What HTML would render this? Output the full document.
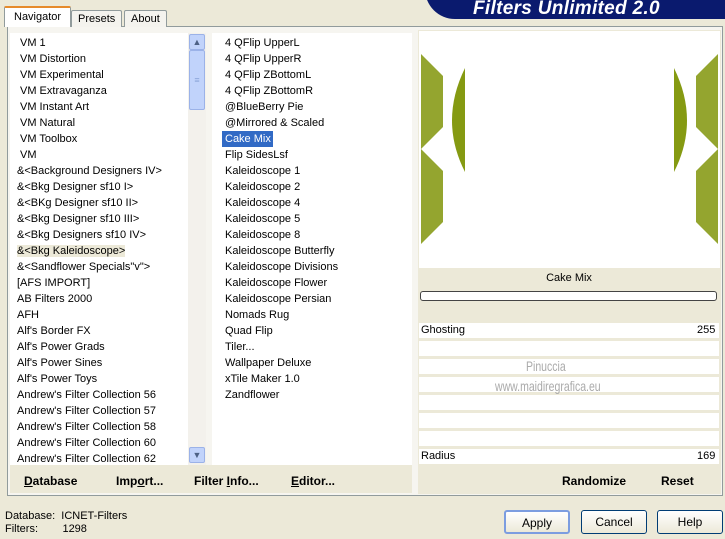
<!DOCTYPE html>
<html><head><style>
*{margin:0;padding:0;box-sizing:border-box}
body{width:725px;height:539px;background:#ece9d8;font-family:"Liberation Sans",sans-serif;font-size:11px;color:#000;position:relative;overflow:hidden}
.abs{position:absolute}
.tab{position:absolute;top:10px;height:17px;border:1px solid #919b9c;border-bottom:none;background:#f4f3ee;padding:2px 6px 0;font-size:11px;border-radius:2px 2px 0 0}
.panel{position:absolute;left:7px;top:26px;width:716px;height:470px;border:1px solid #919b9c;background:#f6f5f0}
.list{position:absolute;background:#fff}
.list div{height:16px;line-height:16px;white-space:nowrap}
.btnbar{position:absolute;font-weight:bold;font-size:12px}
.btn{position:absolute;top:510px;width:66px;height:24px;border:1px solid #003c74;border-radius:3px;background:linear-gradient(#fff,#ece9d8);text-align:center;line-height:22px;font-size:12px}
.row{position:absolute;left:419px;width:300px;background:#fff;height:15px}
</style></head><body>
<div class="abs" style="left:425px;top:-20px;width:310px;height:39px;background:#0a1a6e;border-radius:0 0 0 30px"></div>
<div class="abs" style="left:473px;top:-2px;color:#fff;font-weight:bold;font-style:italic;font-size:19px;letter-spacing:0.3px">Filters Unlimited 2.0</div>
<div class="panel"></div>
<div class="tab" style="left:4px;top:6px;height:21px;background:#fff;border-top:2px solid #e68b2c;z-index:2;padding:3px 9px 0;border-bottom:none">Navigator</div>
<div class="tab" style="left:71px">Presets</div>
<div class="tab" style="left:124px">About</div>
<div class="list" style="left:10px;top:33px;width:178px;height:432px;padding-left:7px;padding-top:2px">
<div style="padding-left:3px">VM 1</div><div style="padding-left:3px">VM Distortion</div><div style="padding-left:3px">VM Experimental</div><div style="padding-left:3px">VM Extravaganza</div><div style="padding-left:3px">VM Instant Art</div><div style="padding-left:3px">VM Natural</div><div style="padding-left:3px">VM Toolbox</div><div style="padding-left:3px">VM</div>
<div>&amp;&lt;Background Designers IV&gt;</div><div>&amp;&lt;Bkg Designer sf10 I&gt;</div><div>&amp;&lt;BKg Designer sf10 II&gt;</div><div>&amp;&lt;Bkg Designer sf10 III&gt;</div><div>&amp;&lt;Bkg Designers sf10 IV&gt;</div><div><span style="background:#ece9d8">&amp;&lt;Bkg Kaleidoscope&gt;</span></div><div>&amp;&lt;Sandflower Specials"v"&gt;</div><div>[AFS IMPORT]</div><div>AB Filters 2000</div><div>AFH</div><div>Alf's Border FX</div><div>Alf's Power Grads</div><div>Alf's Power Sines</div><div>Alf's Power Toys</div><div>Andrew's Filter Collection 56</div><div>Andrew's Filter Collection 57</div><div>Andrew's Filter Collection 58</div><div>Andrew's Filter Collection 60</div><div>Andrew's Filter Collection 62</div>
</div>
<div class="abs" style="left:188px;top:33px;width:18px;height:432px;background:#f3f1ec"></div>
<div class="abs" style="left:189px;top:34px;width:16px;height:16px;background:#c1d3fb;border:1px solid #9bb2e8;border-radius:2px;color:#4d6185;font-size:9px;text-align:center;line-height:14px">&#x25B2;</div>
<div class="abs" style="left:189px;top:50px;width:16px;height:60px;background:#c1d3fb;border:1px solid #9bb2e8;border-radius:2px;color:#8aa4d8;text-align:center;line-height:58px;font-size:9px">&#8801;</div>
<div class="abs" style="left:189px;top:447px;width:16px;height:16px;background:#c1d3fb;border:1px solid #9bb2e8;border-radius:2px;color:#4d6185;font-size:9px;text-align:center;line-height:14px">&#x25BC;</div>
<div class="list" style="left:212px;top:33px;width:200px;height:432px;padding-left:10px;padding-top:2px">
<div style="padding-left:3px">4 QFlip UpperL</div><div style="padding-left:3px">4 QFlip UpperR</div><div style="padding-left:3px">4 QFlip ZBottomL</div><div style="padding-left:3px">4 QFlip ZBottomR</div><div style="padding-left:3px">@BlueBerry Pie</div><div style="padding-left:3px">@Mirrored &amp; Scaled</div><div><span style="background:#316ac5;color:#fff;padding:0 3px;display:inline-block;width:51px">Cake Mix</span></div><div style="padding-left:3px">Flip SidesLsf</div><div style="padding-left:3px">Kaleidoscope 1</div><div style="padding-left:3px">Kaleidoscope 2</div><div style="padding-left:3px">Kaleidoscope 4</div><div style="padding-left:3px">Kaleidoscope 5</div><div style="padding-left:3px">Kaleidoscope 8</div><div style="padding-left:3px">Kaleidoscope Butterfly</div><div style="padding-left:3px">Kaleidoscope Divisions</div><div style="padding-left:3px">Kaleidoscope Flower</div><div style="padding-left:3px">Kaleidoscope Persian</div><div style="padding-left:3px">Nomads Rug</div><div style="padding-left:3px">Quad Flip</div><div style="padding-left:3px">Tiler...</div><div style="padding-left:3px">Wallpaper Deluxe</div><div style="padding-left:3px">xTile Maker 1.0</div><div style="padding-left:3px">Zandflower</div>
</div>
<div class="abs" style="left:10px;top:465px;width:402px;height:28px;background:#ece9d8"></div>
<div class="btnbar" style="left:24px;top:474px"><u>D</u>atabase</div>
<div class="btnbar" style="left:116px;top:474px">Imp<u>o</u>rt...</div>
<div class="btnbar" style="left:194px;top:474px">Filter <u>I</u>nfo...</div>
<div class="btnbar" style="left:291px;top:474px"><u>E</u>ditor...</div>
<div class="abs" style="left:418px;top:30px;width:303px;height:464px;background:#ece9d8"></div>
<svg class="abs" style="left:419px;top:31px" width="301" height="237" viewBox="0 0 301 237">
<rect width="301" height="237" fill="#fff"/>
<polygon points="2,23 24,45 24,96 2,118 24,140 24,191 2,213" fill="#94a52f"/>
<polygon points="299,23 277,45 277,96 299,118 277,140 277,191 299,213" fill="#94a52f"/>
<path d="M46,37 Q20,90 46,141 Z" fill="#859a12"/>
<path d="M255,37 Q281,90 255,141 Z" fill="#859a12"/>
</svg>
<div class="abs" style="left:419px;top:272px;width:300px;text-align:center;font-size:11px">Cake Mix</div>
<div class="abs" style="left:420px;top:291px;width:297px;height:10px;border:1px solid #444;border-radius:3px;background:#fff"></div>
<div class="row" style="top:323px"></div><div class="row" style="top:341px"></div><div class="row" style="top:359px"></div><div class="row" style="top:377px"></div><div class="row" style="top:395px"></div><div class="row" style="top:413px"></div><div class="row" style="top:431px"></div><div class="row" style="top:449px"></div>
<div class="abs" style="left:421px;top:324px">Ghosting</div><div class="abs" style="left:697px;top:324px">255</div>
<div class="abs" style="left:421px;top:450px">Radius</div><div class="abs" style="left:697px;top:450px">169</div>
<div class="abs" style="left:526px;top:358px;color:#aaa;font-size:14px;transform:scaleX(.75);transform-origin:left">Pinuccia</div>
<div class="abs" style="left:495px;top:378px;color:#aaa;font-size:14px;transform:scaleX(.75);transform-origin:left">www.maidiregrafica.eu</div>
<div class="btnbar" style="left:562px;top:474px">Randomize</div>
<div class="btnbar" style="left:661px;top:474px">Reset</div>
<div class="abs" style="left:5px;top:510px;line-height:13px">Database:&nbsp; ICNET-Filters<br>Filters:&nbsp;&nbsp;&nbsp;&nbsp;&nbsp;&nbsp;&nbsp; 1298</div>
<div class="btn" style="left:504px;border:2px solid #7c9de0">Apply</div>
<div class="btn" style="left:581px">Cancel</div>
<div class="btn" style="left:657px">Help</div>
</body></html>
